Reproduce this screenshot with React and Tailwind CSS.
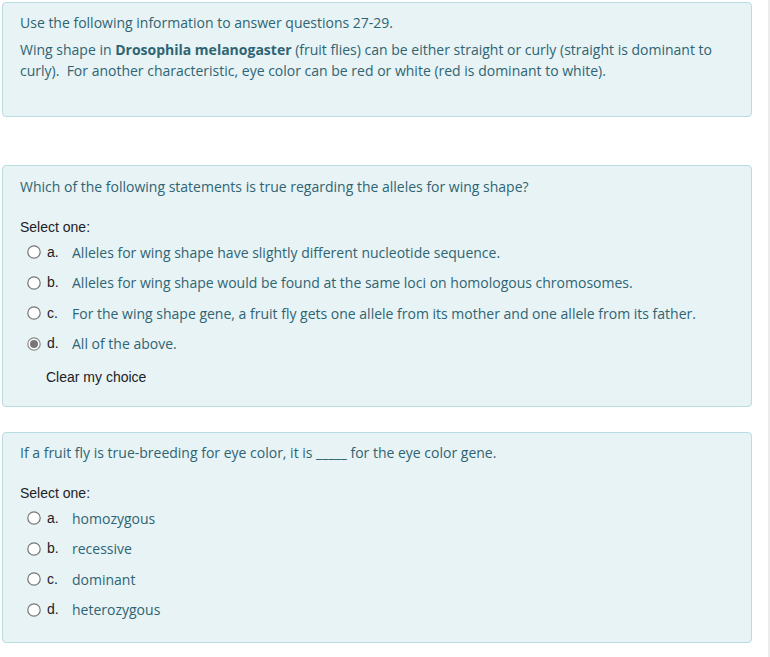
import React from "react";

const openSans = { fontFamily: '"Open Sans", "Noto Sans", sans-serif' };
const arial = { fontFamily: '"Liberation Sans", Arial, sans-serif' };

function Radio({ checked }) {
  return (
    <svg width="14" height="14" viewBox="0 0 14 14" className="shrink-0">
      <circle cx="7" cy="7" r="6.2" fill="#fff" stroke={checked ? "#8a8a8a" : "#767676"} strokeWidth="1.2" />
      {checked && <circle cx="7" cy="7" r="4" fill="#777" />}
    </svg>
  );
}

function Option({ letter, text, checked }) {
  return (
    <div className="flex h-[30.5px] items-center pl-[24px]">
      <Radio checked={checked} />
      <span className="ml-[6px] w-[25px] text-[14px] text-[#1d2125]" style={arial}>
        {letter}.
      </span>
      <span className="text-[14px] text-[#2f6473]" style={openSans}>
        {text}
      </span>
    </div>
  );
}

function Question({ prompt, options, selected, clear, className }) {
  return (
    <div className={"rounded-[4px] border border-[#b8dce2] bg-[#e7f3f5] pl-[17px] " + className}>
      <div className="h-[21px] text-[14px] leading-[21px] text-[#2f6473]" style={openSans}>
        {prompt}
      </div>
      <div className="mt-[21px] h-[19px] text-[14px] leading-[19px] text-[#1d2125]" style={arial}>
        Select one:
      </div>
      <div className="-ml-[17px]">
        {options.map((o, i) => (
          <Option key={i} letter={"abcd"[i]} text={o} checked={selected === i} />
        ))}
      </div>
      {clear && (
        <div className="mt-[8px] h-[20px] pl-[26px] text-[14px] leading-[20px] text-[#1d2125]" style={arial}>
          Clear my choice
        </div>
      )}
    </div>
  );
}

export default function App() {
  return (
    <div className="flex w-[770px] bg-white">
      <div className="w-[752px] pl-[2px] pt-[2px]">
        {/* Info block */}
        <div className="h-[115px] rounded-[4px] border border-[#b8dce2] bg-[#e7f3f5] px-[17px] pt-[9px] text-[14px] leading-[21px] text-[#2f6473]" style={openSans}>
          <p>Use the following information to answer questions 27-29.</p>
          <p className="mt-[6px]">
            Wing shape in <b>Drosophila melanogaster</b> (fruit flies) can be either straight or curly (straight is dominant to
            curly).&nbsp; For another characteristic, eye color can be red or white (red is dominant to white).
          </p>
        </div>

        <Question
          className="mt-[48px] pt-[10px] pb-[19px]"
          prompt="Which of the following statements is true regarding the alleles for wing shape?"
          options={[
            "Alleles for wing shape have slightly different nucleotide sequence.",
            "Alleles for wing shape would be found at the same loci on homologous chromosomes.",
            "For the wing shape gene, a fruit fly gets one allele from its mother and one allele from its father.",
            "All of the above.",
          ]}
          selected={3}
          clear
        />

        <Question
          className="mt-[25px] pt-[9px] pb-[17px]"
          prompt="If a fruit fly is true-breeding for eye color, it is _____ for the eye color gene."
          options={["homozygous", "recessive", "dominant", "heterozygous"]}
        />
      </div>
      <div className="ml-auto min-h-[657px] w-[2px] bg-[#ececec]" />
    </div>
  );
}
